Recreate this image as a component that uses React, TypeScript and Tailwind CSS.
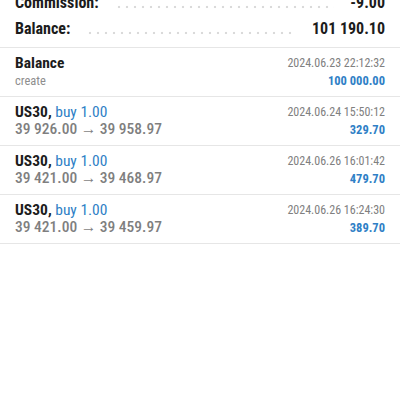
import React, { FC } from 'react';

type Deal = {
  title: string;
  side?: string;
  sub: string;
  date: string;
  amount: string;
};

const deals: Deal[] = [
  { title: 'Balance', sub: 'create', date: '2024.06.23 22:12:32', amount: '100 000.00' },
  { title: 'US30,', side: 'buy 1.00', sub: '39 926.00 → 39 958.97', date: '2024.06.24 15:50:12', amount: '329.70' },
  { title: 'US30,', side: 'buy 1.00', sub: '39 421.00 → 39 468.97', date: '2024.06.26 16:01:42', amount: '479.70' },
  { title: 'US30,', side: 'buy 1.00', sub: '39 421.00 → 39 459.97', date: '2024.06.26 16:24:30', amount: '389.70' },
];

const SummaryRow: FC<{ label: string; value: string }> = ({ label, value }) => (
  <div className="flex items-end h-[26px] px-[15px]">
    <span className="text-[16px] font-bold text-[#1c1c1c] leading-[20px]">{label}</span>
    <span className="flex-1 mx-[16px] mb-[4px] h-[4px] bg-[radial-gradient(circle,#dadada_1px,transparent_1.6px)] bg-[length:8px_4px]" />
    <span className="text-[16px] font-bold text-[#1c1c1c] leading-[20px]">{value}</span>
  </div>
);

const DealRow: FC<{ deal: Deal }> = ({ deal }) => (
  <div className="flex justify-between px-[15px] pt-[7px] pb-[7px] border-b border-[#e6e6e6]">
    <div className="flex flex-col">
      <div className="text-[15.5px] leading-[17px]">
        <span className="font-bold text-[#1c1c1c]">{deal.title}</span>
        {deal.side && <span className="text-[#2f7fc6]"> {deal.side}</span>}
      </div>
      {deal.side ? (
        <div className="text-[15.5px] leading-[17px] font-medium text-[#7f7f7f]">{deal.sub}</div>
      ) : (
        <div className="text-[12.5px] leading-[17px] text-[#8e8e8e]">{deal.sub}</div>
      )}
    </div>
    <div className="flex flex-col items-end">
      <div className="text-[12px] leading-[17px] text-[#808080]">{deal.date}</div>
      <div className="text-[12.5px] leading-[17px] font-bold text-[#2f7fc6]">{deal.amount}</div>
    </div>
  </div>
);

const App: FC = () => {
  return (
    <div className="w-[400px] h-[400px] overflow-hidden bg-white font-['Roboto',sans-serif] [font-stretch:condensed]">
      <div className="-mt-[13px] pb-[8px] border-b border-[#e6e6e6]">
        <SummaryRow label="Commission:" value="-9.00" />
        <SummaryRow label="Balance:" value="101 190.10" />
      </div>
      {deals.map((d, i) => (
        <DealRow key={i} deal={d} />
      ))}
    </div>
  );
};

export default App;
